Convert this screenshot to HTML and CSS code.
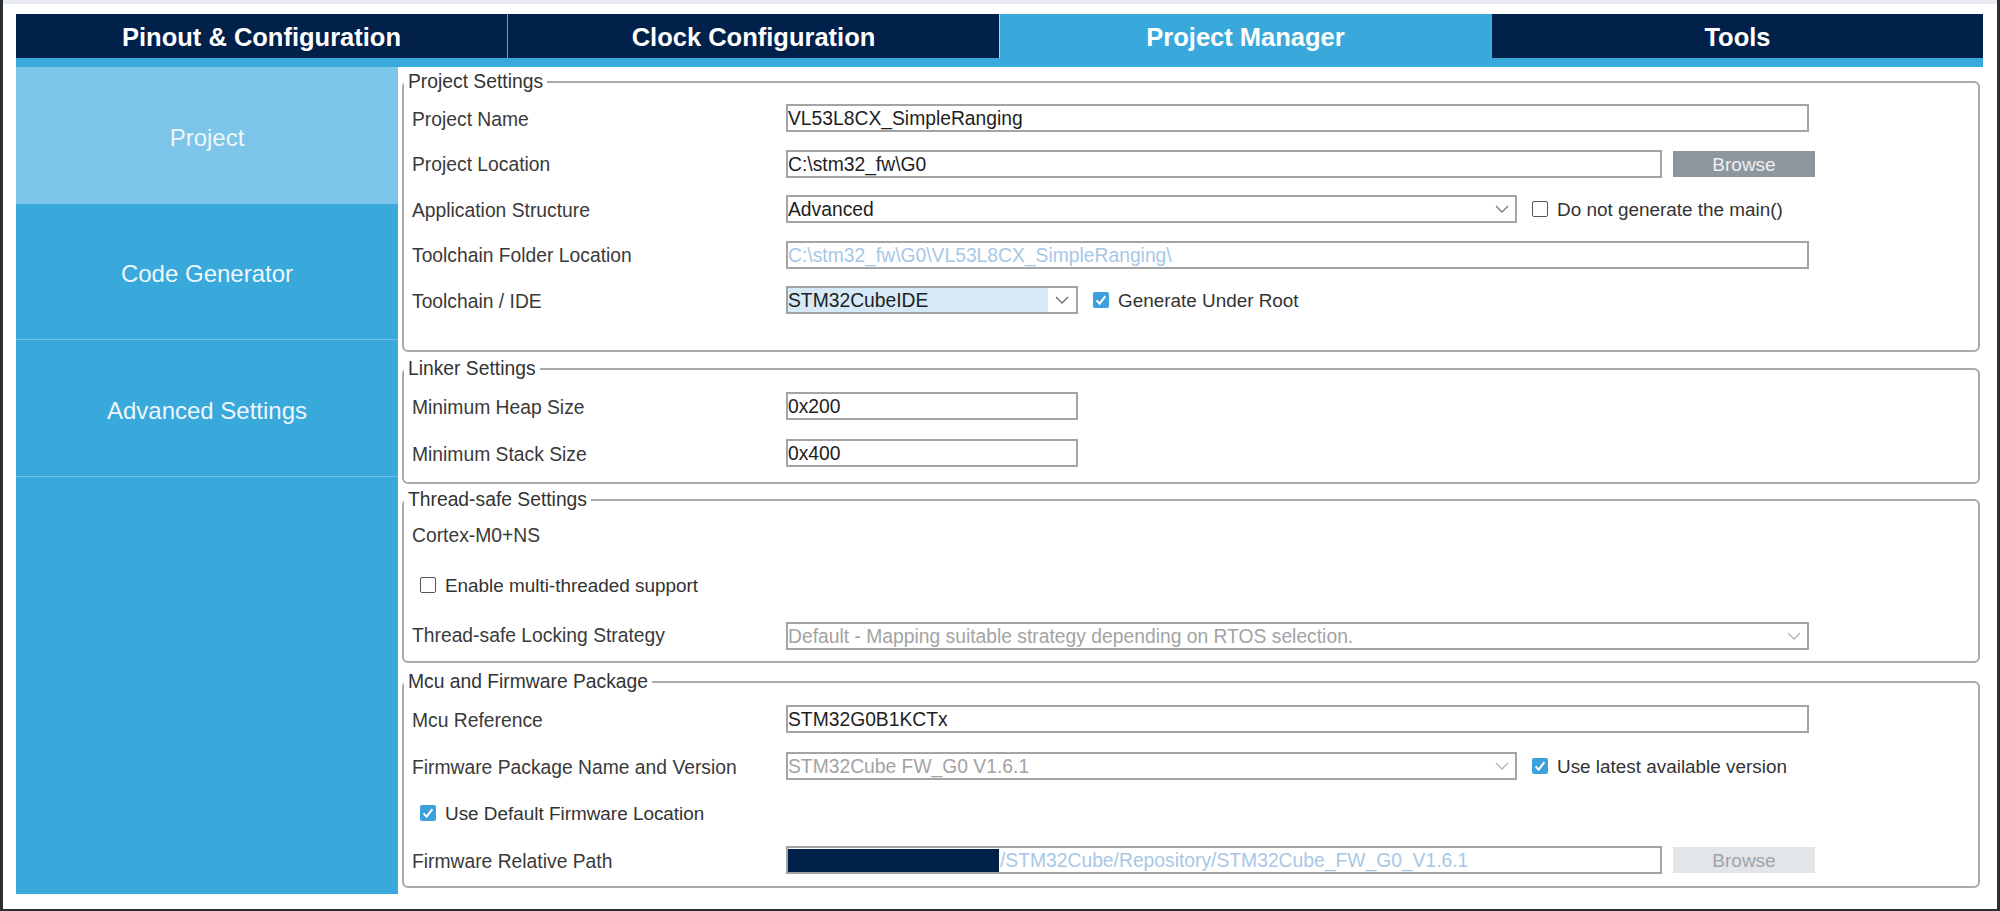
FILE: index.html
```html
<!DOCTYPE html>
<html lang="en">
<head>
<meta charset="utf-8">
<title>Project Manager</title>
<link rel="stylesheet" href="styles.css">
</head>
<body>
<div class="window">
  <div class="topstrip"></div>
  <div class="app">
    <nav class="tabs">
      <div class="tab">Pinout &amp; Configuration</div>
      <div class="tab">Clock Configuration</div>
      <div class="tab active">Project Manager</div>
      <div class="tab">Tools</div>
    </nav>
    <div class="stripe"></div>
    <div class="main">
      <aside class="sidebar">
        <div class="nav-item active">Project</div>
        <div class="nav-item">Code Generator</div>
        <div class="nav-item">Advanced Settings</div>
      </aside>
      <section class="content">
        <fieldset class="group g-project">
          <legend>Project Settings</legend>
          <div class="row">
            <div class="label">Project Name</div>
            <div class="field w-full">VL53L8CX_SimpleRanging</div>
          </div>
          <div class="row">
            <div class="label">Project Location</div>
            <div class="field w-path">C:\stm32_fw\G0</div>
            <div class="btn">Browse</div>
          </div>
          <div class="row">
            <div class="label">Application Structure</div>
            <div class="field select w-select">
              <span class="value">Advanced</span>
              <svg class="chev" width="14" height="8" viewBox="0 0 14 8"><path d="M1 1 L7 7 L13 1" fill="none" stroke="#7a7a7a" stroke-width="1.3"/></svg>
            </div>
            <div class="check"><span class="box"></span>Do not generate the main()</div>
          </div>
          <div class="row">
            <div class="label">Toolchain Folder Location</div>
            <div class="field w-full path-disabled">C:\stm32_fw\G0\VL53L8CX_SimpleRanging\</div>
          </div>
          <div class="row">
            <div class="label">Toolchain / IDE</div>
            <div class="field select select-ide w-small">
              <span class="value">STM32CubeIDE</span>
              <span class="arrow"><svg class="chev" width="14" height="8" viewBox="0 0 14 8"><path d="M1 1 L7 7 L13 1" fill="none" stroke="#6a6a6a" stroke-width="1.3"/></svg></span>
            </div>
            <div class="check"><span class="box on"><svg width="16" height="16" viewBox="0 0 16 16"><path d="M3.6 8.4 L6.6 11.6 L12.4 4.2" fill="none" stroke="#ffffff" stroke-width="2"/></svg></span>Generate Under Root</div>
          </div>
        </fieldset>

        <fieldset class="group g-linker">
          <legend>Linker Settings</legend>
          <div class="row">
            <div class="label">Minimum Heap Size</div>
            <div class="field w-small">0x200</div>
          </div>
          <div class="row">
            <div class="label">Minimum Stack Size</div>
            <div class="field w-small">0x400</div>
          </div>
        </fieldset>

        <fieldset class="group g-thread">
          <legend>Thread-safe Settings</legend>
          <div class="row">
            <div class="label">Cortex-M0+NS</div>
          </div>
          <div class="row check-row">
            <div class="check check-left"><span class="box"></span>Enable multi-threaded support</div>
          </div>
          <div class="row">
            <div class="label">Thread-safe Locking Strategy</div>
            <div class="field select w-full text-disabled">
              <span class="value">Default ‐ Mapping suitable strategy depending on RTOS selection.</span>
              <svg class="chev" width="14" height="8" viewBox="0 0 14 8"><path d="M1 1 L7 7 L13 1" fill="none" stroke="#b4b4b4" stroke-width="1.3"/></svg>
            </div>
          </div>
        </fieldset>

        <fieldset class="group g-mcu">
          <legend>Mcu and Firmware Package</legend>
          <div class="row">
            <div class="label">Mcu Reference</div>
            <div class="field w-full">STM32G0B1KCTx</div>
          </div>
          <div class="row">
            <div class="label">Firmware Package Name and Version</div>
            <div class="field select w-select text-disabled">
              <span class="value">STM32Cube FW_G0 V1.6.1</span>
              <svg class="chev" width="14" height="8" viewBox="0 0 14 8"><path d="M1 1 L7 7 L13 1" fill="none" stroke="#b4b4b4" stroke-width="1.3"/></svg>
            </div>
            <div class="check"><span class="box on"><svg width="16" height="16" viewBox="0 0 16 16"><path d="M3.6 8.4 L6.6 11.6 L12.4 4.2" fill="none" stroke="#ffffff" stroke-width="2"/></svg></span>Use latest available version</div>
          </div>
          <div class="row check-row">
            <div class="check check-left"><span class="box on"><svg width="16" height="16" viewBox="0 0 16 16"><path d="M3.6 8.4 L6.6 11.6 L12.4 4.2" fill="none" stroke="#ffffff" stroke-width="2"/></svg></span>Use Default Firmware Location</div>
          </div>
          <div class="row">
            <div class="label">Firmware Relative Path</div>
            <div class="field w-path path-disabled"><span class="redact"></span>/STM32Cube/Repository/STM32Cube_FW_G0_V1.6.1</div>
            <div class="btn disabled">Browse</div>
          </div>
        </fieldset>
      </section>
    </div>
  </div>
</div>
</body>
</html>
```

FILE: styles.css
```css
html, body {
  margin: 0;
  padding: 0;
  background: #ffffff;
}

body {
  font-family: "Liberation Sans", Arial, sans-serif;
}

.window {
  width: 2000px;
  height: 911px;
  box-sizing: border-box;
  border-left: 3px solid #2b2e33;
  border-right: 3px solid #2b2e33;
  border-bottom: 2px solid #2b2e33;
  background: #ffffff;
  overflow: hidden;
}

.topstrip {
  height: 4px;
  background: #e7eaee;
}

.app {
  padding: 10px 14px 0 13px;
}

/* Top tabs */
.tabs {
  display: flex;
  height: 44px;
  background: #01214a;
}

.tab {
  flex: 1;
  box-sizing: border-box;
  color: #ffffff;
  font-weight: bold;
  font-size: 25.5px;
  line-height: 42px;
  padding-top: 2px;
  text-align: center;
  border-left: 1px solid #8796aa;
  white-space: nowrap;
}

.tab:first-child {
  border-left: none;
}

.tab.active {
  background: #39a9dc;
  border-left-color: #a7d3ec;
}

.stripe {
  height: 9px;
  background: #39a9dc;
}

.main {
  display: flex;
  height: 827px;
}

/* Sidebar */
.sidebar {
  width: 382px;
  flex: none;
  background: #39a8db;
}

.nav-item {
  height: 136.5px;
  box-sizing: border-box;
  border-bottom: 1px solid #70bfe7;
  padding-top: 6px;
  display: flex;
  align-items: center;
  justify-content: center;
  color: #eef7fc;
  font-size: 24px;
}

.nav-item.active {
  background: #7cc5e8;
  border-bottom-color: #7cc5e8;
}

/* Content */
.content {
  flex: 1;
  min-width: 0;
  padding: 4px 3px 0 4px;
  display: flex;
  flex-direction: column;
}

.group {
  margin: 0;
  border: 2px solid #a9a9a9;
  border-radius: 6px;
  padding: 3px 0 0 0;
  min-width: 0;
}

.group legend {
  font-size: 19.3px;
  line-height: 22px;
  color: #333333;
  padding: 0 4px 0 4px;
}

.row {
  display: flex;
  align-items: center;
  height: 46px;
  padding-left: 8px;
}

.g-project {
  padding-top: 2.25px;
  padding-bottom: 27.25px;
}

.g-project .row {
  height: 45.5px;
}

.g-linker {
  margin-top: 6px;
  padding-top: 2.5px;
  padding-bottom: 5.5px;
}

.g-linker .row {
  height: 47px;
}

.g-thread {
  margin-top: 5px;
  padding-top: 0;
  padding-bottom: 0;
}

.g-thread .row {
  height: 50px;
}

.g-thread .label,
.g-thread .check {
  padding-top: 0;
}

.g-mcu {
  margin-top: 8px;
  padding-top: 2.5px;
  padding-bottom: 2.5px;
}

.g-mcu .row {
  height: 47px;
}

.label {
  width: 374px;
  flex: none;
  box-sizing: border-box;
  padding-top: 3px;
  font-size: 19.3px;
  color: #3a3a3a;
  white-space: nowrap;
}

.field {
  height: 28px;
  box-sizing: border-box;
  flex: none;
  border: 2px solid #a4a4a4;
  background: #ffffff;
  font-size: 19.3px;
  color: #1e1e1e;
  padding-left: 0;
  padding-top: 2px;
  display: flex;
  align-items: center;
  white-space: nowrap;
  overflow: hidden;
}

.w-full { width: 1023px; }
.w-path { width: 876px; }
.w-select { width: 731px; }
.w-small { width: 292px; }

.select {
  justify-content: space-between;
  padding-right: 6px;
}

.select .value {
  overflow: hidden;
}

.select .chev {
  margin-top: -2px;
}

.select-ide {
  padding-right: 0;
  padding-top: 0;
}

.select-ide .value {
  flex: 1;
  align-self: stretch;
  display: flex;
  align-items: center;
  padding-top: 2px;
  background: #d6e9f7;
}

.select-ide .arrow {
  width: 28px;
  display: flex;
  align-items: center;
  justify-content: center;
}

.select-ide .chev {
  margin-top: 0;
}

.chev {
  display: block;
  flex: none;
}

.path-disabled {
  color: #a8c7e7;
}

.text-disabled {
  color: #a3a3a3;
}

.redact {
  display: inline-block;
  width: 211px;
  height: 23px;
  margin-top: -2px;
  background: #02214a;
  margin-right: 1px;
}

.btn {
  width: 142px;
  height: 26px;
  box-sizing: border-box;
  padding-top: 2px;
  margin-left: 11px;
  flex: none;
  background: #8f979e;
  color: #eceff1;
  font-size: 19px;
  display: flex;
  align-items: center;
  justify-content: center;
}

.btn.disabled {
  background: #e3e6e9;
  color: #9ea4aa;
}

.check {
  display: flex;
  align-items: center;
  margin-left: 15px;
  padding-top: 2px;
  font-size: 18.9px;
  color: #333333;
  white-space: nowrap;
}

.check-row {
  padding-left: 16px;
}

.check-left {
  margin-left: 0;
}

.box {
  width: 16px;
  height: 16px;
  box-sizing: border-box;
  border: 1.5px solid #555555;
  border-radius: 2px;
  margin-right: 9px;
  margin-top: -2px;
  background: #ffffff;
  flex: none;
  display: flex;
  align-items: center;
  justify-content: center;
  overflow: hidden;
}

.box.on {
  background: #3ba0db;
  border: none;
}

.box svg {
  display: block;
}
```
